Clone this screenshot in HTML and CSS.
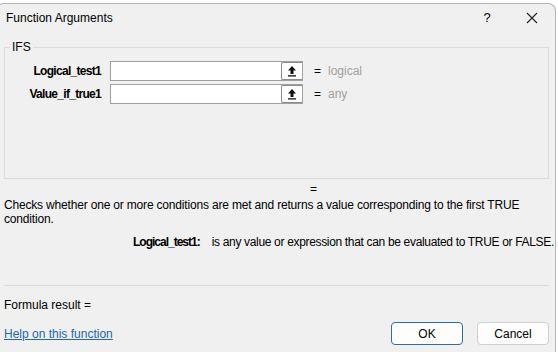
FILE: index.html
```html
<!DOCTYPE html>
<html lang="en">
<head>
    <meta charset="UTF-8">
    <title>Function Arguments</title>
    <link rel="stylesheet" href="styles.css">
</head>
<body>
    <div class="dialog">
        <div class="titlebar">
            <span class="title">Function Arguments</span>
            <span class="help-btn">?</span>
            <span class="close-btn">
                <svg width="12" height="12" viewBox="0 0 12 12"><path d="M1 1L11 11M11 1L1 11" stroke="#222" stroke-width="1.1" fill="none"/></svg>
            </span>
        </div>

        <div class="group">
            <span class="legend">IFS</span>
            <div class="arg-row first">
                <label class="arg-label">Logical_test1</label>
                <div class="arg-input">
                    <span class="ref-btn">
                        <svg width="10" height="12" viewBox="0 0 10 12"><path d="M5 1L1 5.5H3.5V9H6.5V5.5H9Z" fill="#111"/><rect x="1" y="10.2" width="8" height="1.3" fill="#111"/></svg>
                    </span>
                </div>
                <span class="eq">=</span>
                <span class="arg-type">logical</span>
            </div>
            <div class="arg-row">
                <label class="arg-label">Value_if_true1</label>
                <div class="arg-input">
                    <span class="ref-btn">
                        <svg width="10" height="12" viewBox="0 0 10 12"><path d="M5 1L1 5.5H3.5V9H6.5V5.5H9Z" fill="#111"/><rect x="1" y="10.2" width="8" height="1.3" fill="#111"/></svg>
                    </span>
                </div>
                <span class="eq">=</span>
                <span class="arg-type">any</span>
            </div>
        </div>

        <div class="result-eq">=</div>
        <p class="desc">Checks whether one or more conditions are met and returns a value corresponding to the first TRUE<br>condition.</p>
        <p class="arg-desc"><b>Logical_test1:</b><span class="arg-text">is any value or expression that can be evaluated to TRUE or FALSE.</span></p>

        <div class="footer">
            <div class="formula">Formula result =</div>
            <div class="bottom-row">
                <a class="help-link" href="#">Help on this function</a>
                <div class="buttons">
                    <button class="btn btn-ok">OK</button>
                    <button class="btn">Cancel</button>
                </div>
            </div>
        </div>
    </div>
</body>
</html>
```

FILE: styles.css
```css
html, body {
    height: 352px;
    overflow: hidden;
}

body {
    margin: 0;
    background-color: #ffffff;
    font-family: "Liberation Sans", Arial, sans-serif;
    font-size: 12px;
    line-height: 14px;
    color: #000;
}

.dialog {
    margin: 3px 0 0 -4px;
    width: 560px;
    height: 349px;
    box-sizing: border-box;
    background-color: #f0f0f0;
    border: 1px solid #b4b4b4;
    border-bottom: none;
    border-radius: 8px 8px 0 0;
    padding: 0 6px 0 7px;
}

.titlebar {
    display: flex;
    align-items: center;
    height: 28px;
    padding-left: 2px;
}

.title {
    flex: 1;
}

.help-btn {
    width: 34px;
    margin-right: 11px;
    text-align: center;
    font-size: 13px;
}

.close-btn {
    width: 34px;
    display: flex;
    justify-content: center;
}

.group {
    margin-top: 15px;
    width: 545px;
    height: 132px;
    box-sizing: border-box;
    border: 1px solid #dcdcdc;
}

.legend {
    display: block;
    width: fit-content;
    margin: -8px 0 0 5px;
    padding: 0 2px;
    background-color: #f0f0f0;
}

.arg-row {
    display: flex;
    align-items: center;
    height: 23px;
}

.arg-row.first {
    margin-top: 5px;
}

.arg-label {
    width: 96px;
    text-align: right;
    font-weight: bold;
    letter-spacing: -0.7px;
    margin-right: 9px;
}

.arg-input {
    width: 193px;
    height: 20px;
    box-sizing: border-box;
    background: #fff;
    border: 1px solid #a0a0a0;
    display: flex;
    justify-content: flex-end;
    align-items: center;
}

.ref-btn {
    width: 21px;
    height: 18px;
    box-sizing: border-box;
    border: 1px solid #8c8c8c;
    border-right: none;
    border-radius: 2px 0 0 2px;
    background: #fdfdfd;
    display: flex;
    align-items: center;
    justify-content: center;
}

.eq {
    margin-left: 11px;
    width: 14px;
}

.arg-type {
    color: #a0a0a0;
}

.result-eq {
    margin: 3px 0 0 306px;
}

.desc {
    margin: 2px 0 0 0;
    white-space: nowrap;
    letter-spacing: -0.18px;
}

.arg-desc {
    margin: 9px 0 0 129px;
    white-space: nowrap;
    display: flex;
}

.arg-desc b {
    letter-spacing: -1px;
}

.arg-text {
    margin-left: 12px;
    letter-spacing: -0.33px;
}

.footer {
    margin-top: 36px;
    width: 545px;
    border-top: 1px solid #dcdcdc;
}

.formula {
    margin-top: 12px;
}

.bottom-row {
    display: flex;
    justify-content: space-between;
    align-items: center;
    margin-top: 10px;
}

.help-link {
    color: #1f66ad;
    text-decoration: underline;
}

.buttons {
    display: flex;
    gap: 14px;
}

.btn {
    width: 72px;
    height: 23px;
    font-family: inherit;
    font-size: 12px;
    background: #fdfdfd;
    border: 1px solid #d0d0d0;
    border-radius: 4px;
    padding: 0;
}

.btn-ok {
    border: 1px solid #2d6d9c;
}
```
